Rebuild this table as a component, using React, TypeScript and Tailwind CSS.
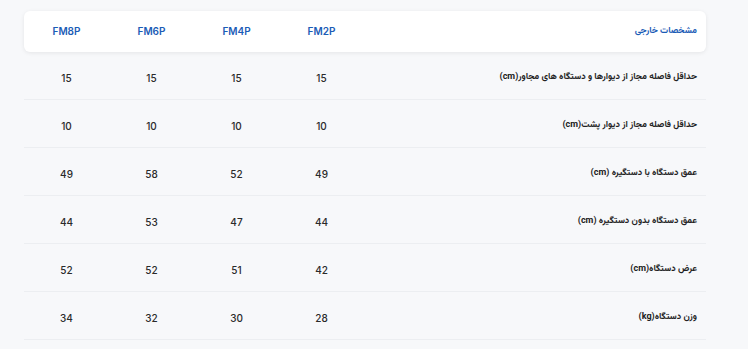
import React from "react";

const models = ["FM8P", "FM6P", "FM4P", "FM2P"];

const rows: { label: string; values: string[] }[] = [
  { label: "حداقل فاصله مجاز از دیوارها و دستگاه های مجاور(cm)", values: ["15", "15", "15", "15"] },
  { label: "حداقل فاصله مجاز از دیوار پشت(cm)", values: ["10", "10", "10", "10"] },
  { label: "عمق دستگاه با دستگیره (cm)", values: ["49", "58", "52", "49"] },
  { label: "عمق دستگاه بدون دستگیره (cm)", values: ["44", "53", "47", "44"] },
  { label: "عرض دستگاه(cm)", values: ["52", "52", "51", "42"] },
  { label: "وزن دستگاه(kg)", values: ["34", "32", "30", "28"] },
];

const arabic = { fontFamily: '"Vazirmatn", "Noto Sans Arabic", "Noto Kufi Arabic", "DejaVu Sans", sans-serif' };

export default function App() {
  return (
    <main
      className="min-h-screen bg-[#f7f8fa] pl-6 pr-[42px] pt-[11px]"
      style={{ fontFamily: '"Inter", "DejaVu Sans", sans-serif' }}
    >
      <div className="flex h-[41px] items-center rounded-md bg-white shadow-[0_1px_4px_rgba(0,0,0,0.08)]">
        {models.map((m) => (
          <div key={m} className="w-[85px] text-center text-[10px] font-semibold text-[#1b5cb6]">
            {m}
          </div>
        ))}
        <div dir="rtl" style={arabic} className="flex-1 pr-[9px] text-[9px] font-bold text-[#1b5cb6]">
          مشخصات خارجی
        </div>
      </div>

      {rows.map((r, i) => (
        <div key={i} className="flex h-[48px] items-center border-b border-[#eceef1] pt-[5px]">
          {r.values.map((v, j) => (
            <div key={j} className="w-[85px] text-center text-[10px] font-medium text-[#2a2a2a]">
              {v}
            </div>
          ))}
          <div dir="rtl" style={arabic} className="flex-1 pr-[9px] text-[9px] font-bold text-[#222]">
            {r.label}
          </div>
        </div>
      ))}
    </main>
  );
}
